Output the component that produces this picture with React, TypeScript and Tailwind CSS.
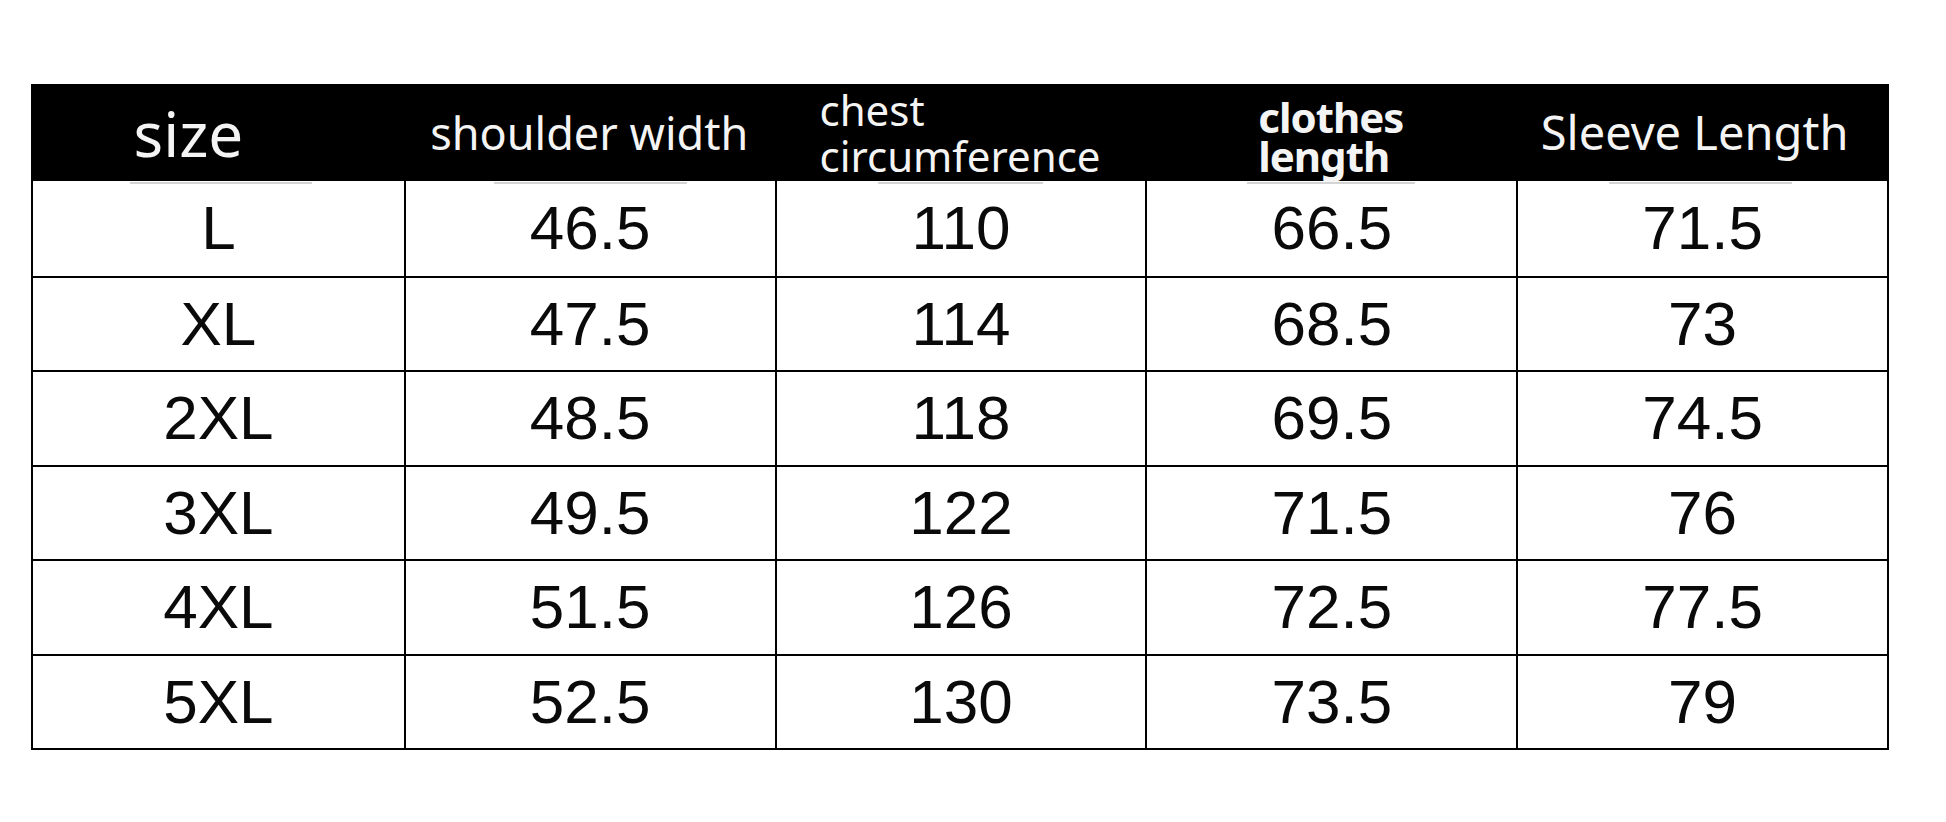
import React from 'react';

const rows = [
  ['L', '46.5', '110', '66.5', '71.5'],
  ['XL', '47.5', '114', '68.5', '73'],
  ['2XL', '48.5', '118', '69.5', '74.5'],
  ['3XL', '49.5', '122', '71.5', '76'],
  ['4XL', '51.5', '126', '72.5', '77.5'],
  ['5XL', '52.5', '130', '73.5', '79'],
];

// faint grey scan marks under each heading
function Smudge({ className }: { className: string }) {
  return <span className={`absolute bottom-[-3px] h-[2px] bg-[#d4d4d4] ${className}`} />;
}

export default function App() {
  return (
    <div className="w-full h-[822px] bg-white pt-[84px] pl-[31px]">
      <div className="w-[1858px] border-x-2 border-b-2 border-black">
        {/* Header */}
        <div className="grid grid-cols-5 h-[97px] bg-black text-[#f4f4f4] font-['Noto_Sans',sans-serif]">
          <div className="relative flex items-center justify-center pr-[60px]">
            <span className="text-[62px] leading-none">size</span>
            <Smudge className="left-[97px] w-[182px]" />
          </div>
          <div className="relative flex items-center justify-center">
            <span className="text-[45px] leading-none">shoulder width</span>
            <Smudge className="left-[90px] w-[193px]" />
          </div>
          <div className="relative flex items-center justify-center">
            <div className="text-left text-[42px] leading-[46px]">
              <div>chest</div>
              <div>circumference</div>
            </div>
            <Smudge className="left-[103px] w-[165px]" />
          </div>
          <div className="relative flex items-center justify-center pt-[7px]">
            <div className="text-left text-[42px] leading-[39px] font-bold tracking-[-1px]">
              <div>clothes</div>
              <div>length</div>
            </div>
            <Smudge className="left-[102px] w-[168px]" />
          </div>
          <div className="relative flex items-center justify-center pr-[14px]">
            <span className="text-[47px] leading-none">Sleeve Length</span>
            <Smudge className="left-[93px] w-[183px]" />
          </div>
        </div>

        {/* Body */}
        {rows.map((row, i) => (
          <div
            key={row[0]}
            className={`grid grid-cols-5 h-[94.5px] font-['Liberation_Sans',Arial,sans-serif] text-[62px] leading-none text-[#0a0a0a] ${
              i > 0 ? 'border-t-2 border-black' : ''
            }`}
          >
            {row.map((cell, j) => (
              <div
                key={j}
                className={`flex items-center justify-center ${j > 0 ? 'border-l-2 border-black' : ''}`}
              >
                {cell}
              </div>
            ))}
          </div>
        ))}
      </div>
    </div>
  );
}
